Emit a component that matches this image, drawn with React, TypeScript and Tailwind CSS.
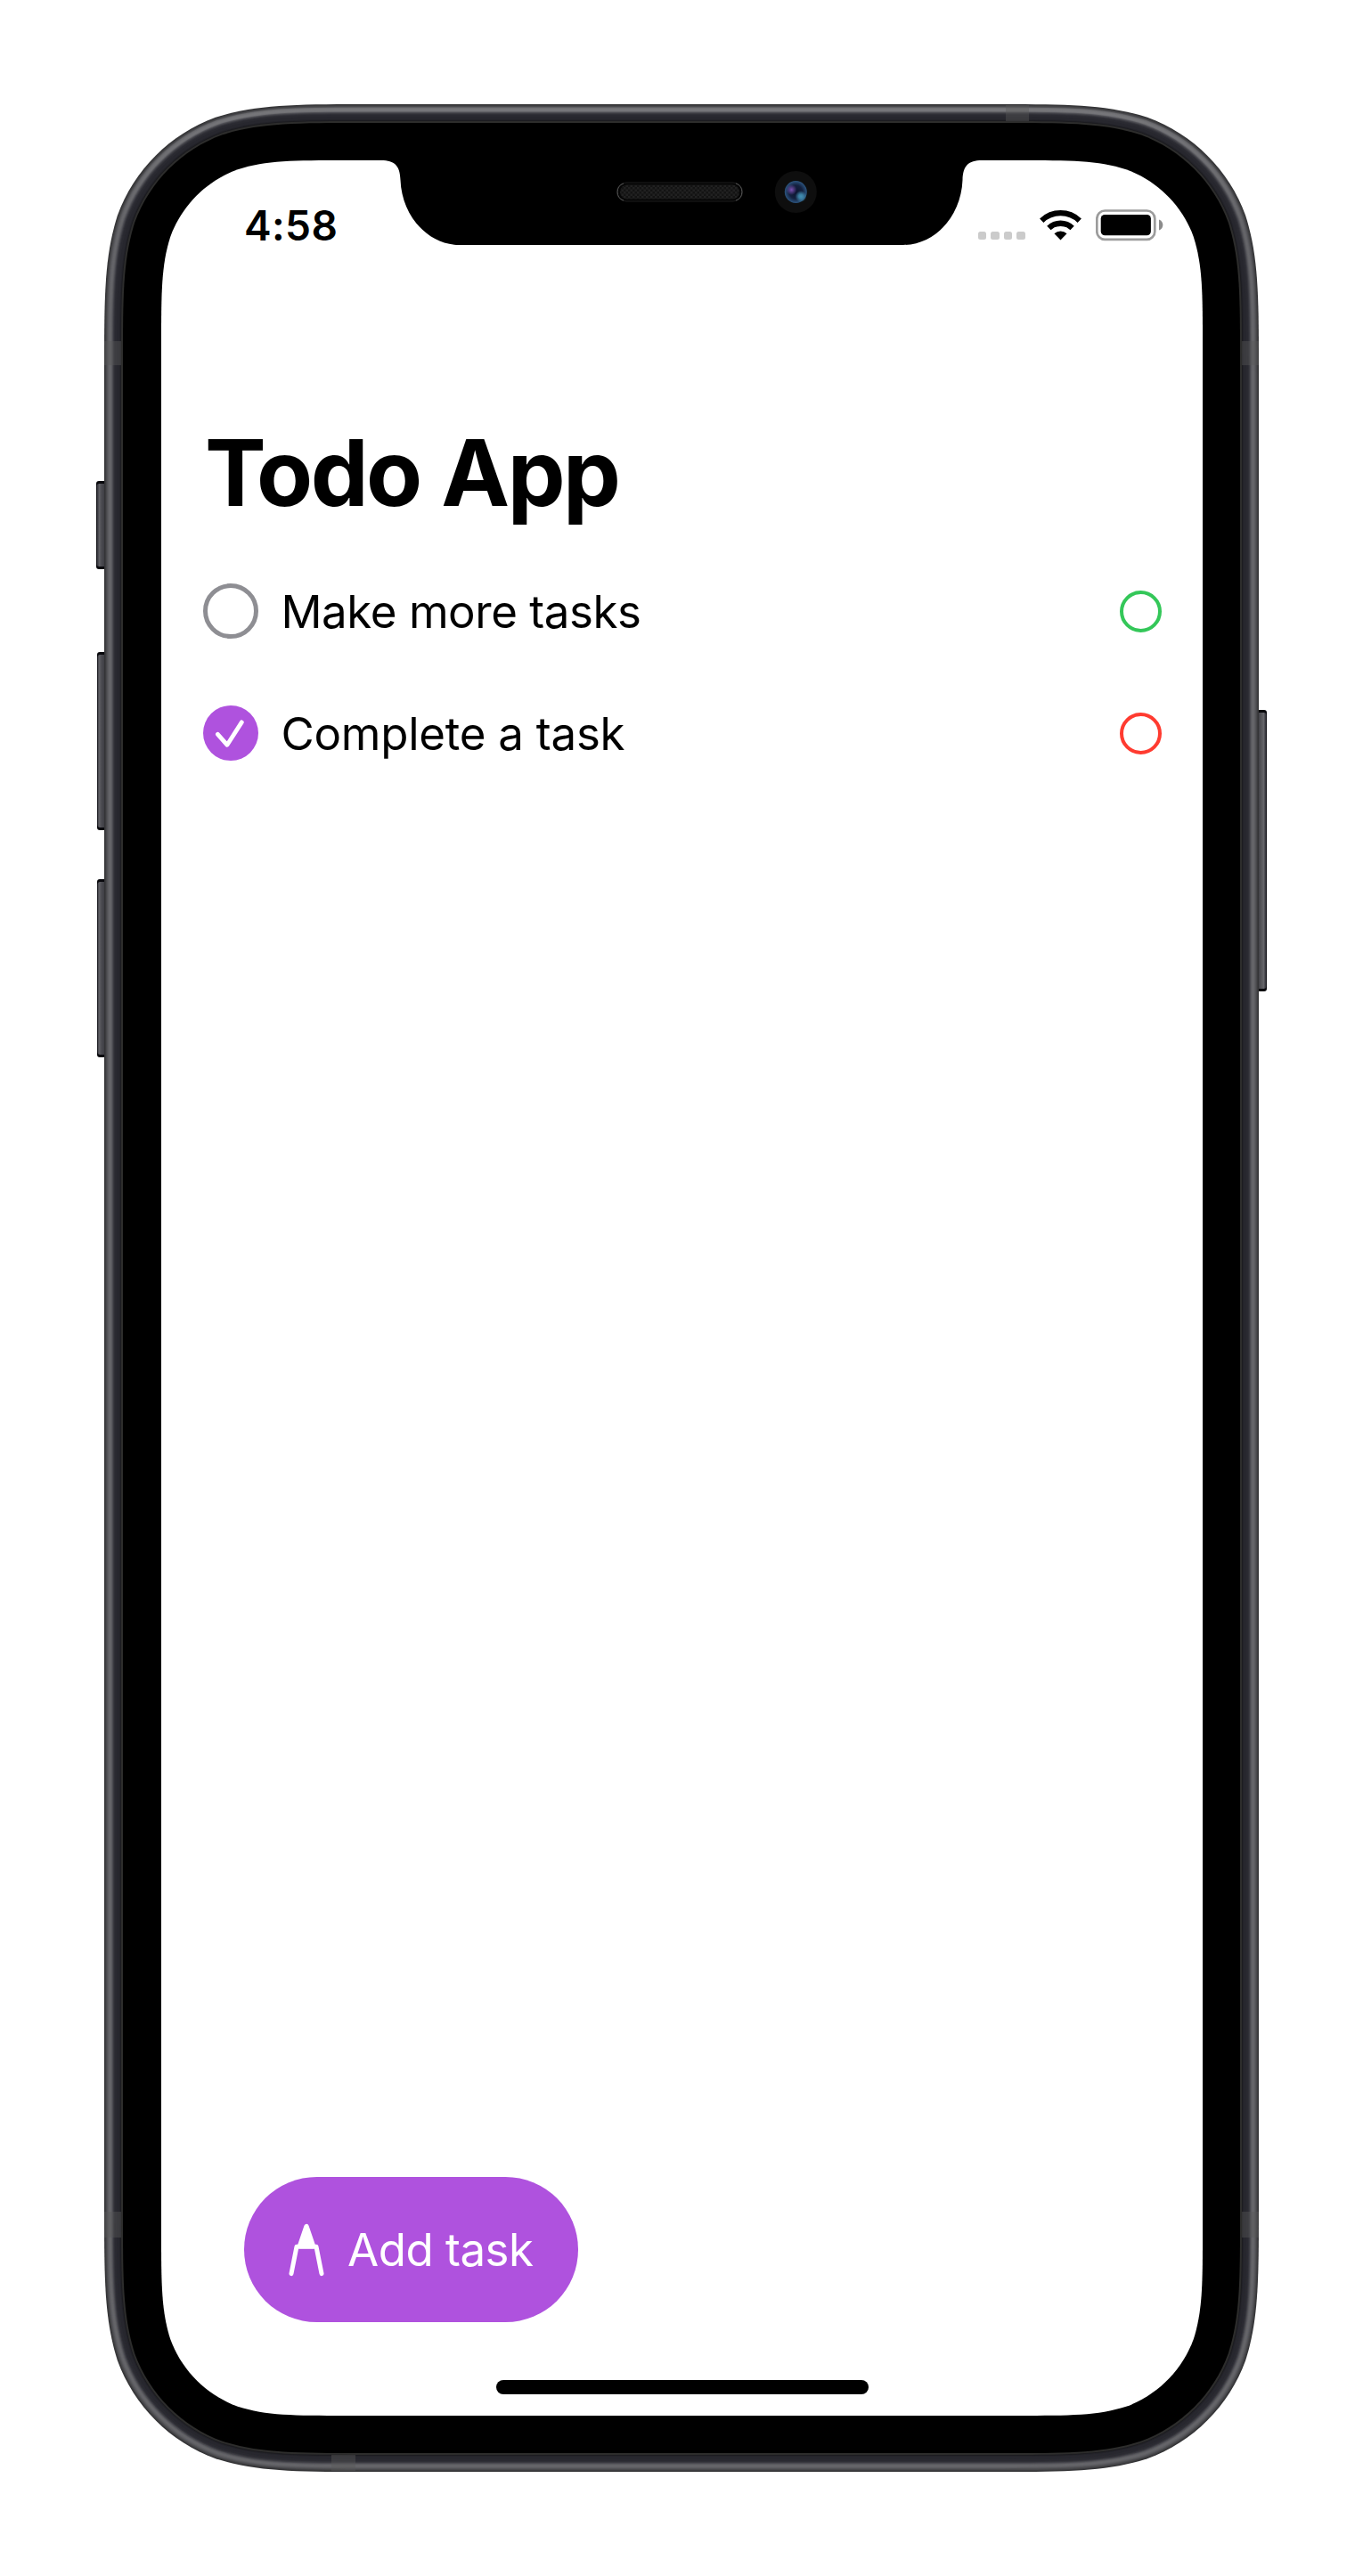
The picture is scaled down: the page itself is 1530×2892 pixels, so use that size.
const K = [1.528665, 1.08849296, 0.86840694, 0.63149379, 0.37282383, 0.16905956, 0.07491139];

/* Continuous-curvature rounded rectangle. */
function squircle(x: number, y: number, w: number, h: number, r: number) {
  const X = x + w;
  const Y = y + h;
  const [a, b, c, d, e, f, g] = K.map((k) => k * r);
  return [
    `M${x + a} ${y}H${X - a}`,
    `C${X - b} ${y} ${X - c} ${y} ${X - d} ${y + g}`,
    `C${X - e} ${y + f} ${X - f} ${y + e} ${X - g} ${y + d}`,
    `C${X} ${y + c} ${X} ${y + b} ${X} ${y + a}`,
    `V${Y - a}`,
    `C${X} ${Y - b} ${X} ${Y - c} ${X - g} ${Y - d}`,
    `C${X - f} ${Y - e} ${X - e} ${Y - f} ${X - d} ${Y - g}`,
    `C${X - c} ${Y} ${X - b} ${Y} ${X - a} ${Y}`,
    `H${x + a}`,
    `C${x + b} ${Y} ${x + c} ${Y} ${x + d} ${Y - g}`,
    `C${x + e} ${Y - f} ${x + f} ${Y - e} ${x + g} ${Y - d}`,
    `C${x} ${Y - c} ${x} ${Y - b} ${x} ${Y - a}`,
    `V${y + a}`,
    `C${x} ${y + b} ${x} ${y + c} ${x + g} ${y + d}`,
    `C${x + f} ${y + e} ${x + e} ${y + f} ${x + d} ${y + g}`,
    `C${x + c} ${y} ${x + b} ${y} ${x + a} ${y}Z`,
  ].join("");
}

/* Metal rim shading, from the outer edge inwards: [inset, colour]. */
const RIM: [number, string][] = [
  [0, "#343436"],
  [1, "#3c3c3f"],
  [2, "#48484b"],
  [3, "#525256"],
  [4, "#5c5c60"],
  [5, "#636367"],
  [6, "#66666a"],
  [7, "#636367"],
  [8, "#59595e"],
  [9, "#4a4a50"],
  [10, "#3a3a40"],
  [11, "#2f2f36"],
  [12, "#2a2a31"],
  [14, "#27272e"],
  [17, "#232329"],
  [18, "#1c1c20"],
  [19, "#2d2d2c"],
  [21, "#000000"],
];

const SIDE_BUTTONS = [
  { x: 108, y: 540, h: 99, right: false },
  { x: 109, y: 732, h: 200, right: false },
  { x: 109, y: 987, h: 200, right: false },
  { x: 1400, y: 797, h: 316, right: true },
];

function PhoneShell() {
  return (
    <svg className="absolute inset-0" width="1530" height="2892" viewBox="0 0 1530 2892" aria-hidden="true">
      <defs>
        <linearGradient id="btnL" x1="108" x2="118" y1="0" y2="0" gradientUnits="userSpaceOnUse">
          <stop offset="0" stopColor="#15151a" />
          <stop offset="0.15" stopColor="#3a3a41" />
          <stop offset="0.35" stopColor="#5f5f64" />
          <stop offset="0.6" stopColor="#4a4a50" />
          <stop offset="1" stopColor="#3c3c42" />
        </linearGradient>
        <linearGradient id="btnR" x1="1422" x2="1412" y1="0" y2="0" gradientUnits="userSpaceOnUse">
          <stop offset="0" stopColor="#15151a" />
          <stop offset="0.15" stopColor="#3a3a41" />
          <stop offset="0.35" stopColor="#65656a" />
          <stop offset="0.6" stopColor="#57575b" />
          <stop offset="1" stopColor="#3c3c42" />
        </linearGradient>
        <linearGradient id="shine" x1="0" x2="0" y1="117" y2="260" gradientUnits="userSpaceOnUse">
          <stop offset="0" stopColor="#fff" stopOpacity="0.12" />
          <stop offset="1" stopColor="#fff" stopOpacity="0" />
        </linearGradient>
        <pattern id="mesh" width="5" height="5" patternUnits="userSpaceOnUse">
          <rect width="5" height="5" fill="#131313" />
          <rect width="2.5" height="2.5" fill="#212121" />
          <rect x="2.5" y="2.5" width="2.5" height="2.5" fill="#212121" />
        </pattern>
        <radialGradient id="lens">
          <stop offset="0" stopColor="#0c1430" />
          <stop offset="0.6" stopColor="#14213f" />
          <stop offset="1" stopColor="#2c5580" />
        </radialGradient>
        <radialGradient id="violet">
          <stop offset="0" stopColor="#7a50b0" />
          <stop offset="1" stopColor="#7a50b0" stopOpacity="0" />
        </radialGradient>
        <radialGradient id="cyan">
          <stop offset="0" stopColor="#4290b4" />
          <stop offset="0.4" stopColor="#4290b4" stopOpacity="0.8" />
          <stop offset="1" stopColor="#4290b4" stopOpacity="0" />
        </radialGradient>
      </defs>

      {SIDE_BUTTONS.map((b) => (
        <g key={b.y}>
          <rect x={b.x} y={b.y} width="22" height={b.h} rx="3" fill="#08080c" />
          <rect
            x={b.right ? b.x : b.x + 0.5}
            y={b.y + 3}
            width="21.5"
            height={b.h - 6}
            rx="3"
            fill={b.right ? "url(#btnR)" : "url(#btnL)"}
          />
        </g>
      ))}

      {RIM.map(([i, fill]) => (
        <path key={i} d={squircle(117 + i, 117 + i, 1296 - 2 * i, 2658 - 2 * i, 198 - i)} fill={fill} />
      ))}
      <path d={squircle(123, 123, 1284, 2646, 192)} fill="none" stroke="url(#shine)" strokeWidth="5" />

      <g fill="#585858" fillOpacity="0.42">
        <rect x="117" y="383" width="19" height="27" />
        <rect x="1394" y="383" width="19" height="27" />
        <rect x="117" y="2483" width="19" height="29" />
        <rect x="1394" y="2483" width="19" height="29" />
        <rect x="1129" y="118" width="26" height="18" />
        <rect x="372" y="2756" width="27" height="18" />
      </g>

      <path d={squircle(181, 180, 1169, 2532, 136)} fill="#fff" />
      <path
        d="M428 179V180C443 180 449 186 449.5 202C451 242 480 275 516 275H1014C1050 275 1079 242 1080.5 202C1081 186 1087 180 1102 180V179Z"
        fill="#000"
      />

      <rect x="692.5" y="205" width="141" height="21" rx="10.5" fill="#050505" stroke="#1c1c1c" />
      <path d="M700 206A10 10 0 0 0 700 225M826 206A10 10 0 0 1 826 225" fill="none" stroke="#555" strokeWidth="1" />
      <rect x="696" y="207.5" width="134" height="16" rx="8" fill="url(#mesh)" />

      <circle cx="893.3" cy="215.5" r="23.5" fill="#0e0e0e" />
      <circle cx="893.3" cy="215.5" r="12.5" fill="url(#lens)" />
      <circle cx="888.5" cy="213" r="6" fill="url(#violet)" />
      <circle cx="899" cy="220.5" r="6.5" fill="url(#cyan)" />
    </svg>
  );
}

function StatusBar() {
  return (
    <header className="flex h-[180px] items-start justify-between pt-[55px] pr-[44px] pl-[93px]">
      <time className="text-[46px] leading-[36px] font-semibold tracking-[0.4px]">4:58</time>
      <div className="flex h-[36px] items-start">
        <div className="mt-[24.7px] flex gap-[4.9px]">
          {[0, 1, 2, 3].map((i) => (
            <span key={i} className="h-[9.6px] w-[9.7px] rounded-[2.5px] bg-[#cbcbcb]" />
          ))}
        </div>
        <svg className="ml-[16px]" width="47" height="34.5" viewBox="0 0 48 35" aria-label="Wi-Fi">
          <g fill="none" stroke="#000" strokeWidth="6.4">
            <path d="M2.3 12.8A31.5 31.5 0 0 1 45.7 12.8" />
            <path d="M10.6 21.3A19.5 19.5 0 0 1 37.4 21.3" />
          </g>
          <path d="M24 35L16.8 27.8A10.5 10.5 0 0 1 31.2 27.8Z" />
        </svg>
        <svg className="ml-[16px]" width="76" height="36" viewBox="0 0 76 36" aria-label="Battery">
          <rect x="1.3" y="1.5" width="65" height="32.4" rx="9" fill="none" stroke="#9c9c9c" strokeWidth="2.7" />
          <rect x="5.7" y="6" width="56.2" height="23.2" rx="4.5" />
          <path d="M71 11.5C76.8 13.5 76.8 21.5 71 23.5Z" fill="#8c8c8c" />
        </svg>
      </div>
    </header>
  );
}

const TASKS = [
  { title: "Make more tasks", done: false, dot: "border-[#34c759]", tracking: "tracking-[-0.45px]" },
  { title: "Complete a task", done: true, dot: "border-[#ff3b30]", tracking: "tracking-[-0.25px]" },
];

function Check({ done }: { done: boolean }) {
  if (!done) return <span className="size-[62px] rounded-full border-[5.5px] border-[#8e8e93]" />;
  return (
    <span className="size-[62px] rounded-full bg-[#af52de]">
      <svg width="62" height="62" viewBox="0 0 62 62" aria-hidden="true">
        <path
          d="M16.4 32.3L27 44.3L43.3 18.9"
          fill="none"
          stroke="#fff"
          strokeWidth="4.8"
          strokeLinecap="round"
          strokeLinejoin="round"
        />
      </svg>
    </span>
  );
}

export default function App() {
  return (
    <div className="relative h-[2892px] w-[1530px] bg-white px-[181px] pt-[180px] font-['Inter',sans-serif] text-black">
      <PhoneShell />
      <main className="relative flex h-[2532px] w-[1169px] flex-col">
        <StatusBar />
        <h1 className="mt-[108px] ml-[49px] text-[103px] leading-[126px] font-bold tracking-[-2.6px] whitespace-nowrap [word-spacing:2px]">
          Todo App
        </h1>
        <ul className="mt-[23.5px] flex flex-col pr-[46.5px] pl-[47px]">
          {TASKS.map((t) => (
            <li key={t.title} className="flex h-[137px] items-center">
              <Check done={t.done} />
              <span className={`ml-[25.5px] grow pt-[2px] text-[51px] leading-[62px] whitespace-nowrap ${t.tracking}`}>
                {t.title}
              </span>
              <span className={`size-[47px] rounded-full border-4 ${t.dot}`} />
            </li>
          ))}
        </ul>
        <button className="mt-auto mb-[65px] ml-[93px] flex h-[163px] w-[375px] shrink-0 items-center rounded-full bg-[#af52de] pl-[50px] text-white">
          <svg width="40" height="60" viewBox="0 0 40 60" aria-hidden="true">
            <path d="M20 3.5L12.5 25.5H27.5Z" fill="#fff" stroke="#fff" strokeWidth="5.4" strokeLinejoin="round" />
            <path
              d="M3 56.6L9 26.2H31L37 56.6"
              fill="none"
              stroke="#fff"
              strokeWidth="5"
              strokeLinecap="round"
              strokeLinejoin="round"
            />
          </svg>
          <span className="ml-[26px] pt-[1px] text-[51px] leading-[62px] tracking-[-0.5px] whitespace-nowrap">
            Add task
          </span>
        </button>
        <div className="mb-[24px] ml-[376px] h-[16px] w-[418px] shrink-0 rounded-full bg-black" />
      </main>
    </div>
  );
}
